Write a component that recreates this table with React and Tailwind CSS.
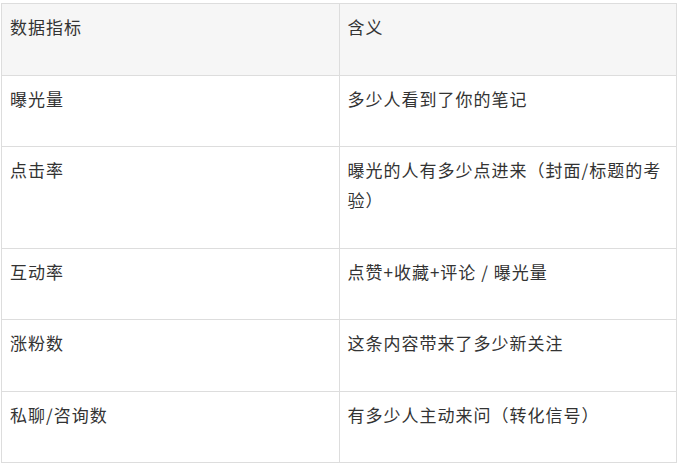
const rows = [
  { metric: "曝光量", meaning: "多少人看到了你的笔记" },
  { metric: "点击率", meaning: "曝光的人有多少点进来（封面/标题的考验）" },
  { metric: "互动率", meaning: "点赞+收藏+评论 / 曝光量" },
  { metric: "涨粉数", meaning: "这条内容带来了多少新关注" },
  { metric: "私聊/咨询数", meaning: "有多少人主动来问（转化信号）" },
];

const cell = "border border-[#dddddd] pl-2 pr-2 pt-2 pb-[32.5px] align-top w-1/2";

export default function App() {
  return (
    <div
      className="bg-white w-[678px] h-[468px] pt-[3px] pl-px text-[17px] leading-[30px] tracking-[1px] text-[#333333]"
      style={{ fontFamily: '"Noto Sans CJK SC", "Noto Sans", sans-serif' }}
    >
      <table className="w-[676px] border-collapse table-fixed text-left">
        <thead className="bg-[#f6f6f6]">
          <tr>
            <th className={cell + " font-normal"}>数据指标</th>
            <th className={cell + " font-normal"}>含义</th>
          </tr>
        </thead>
        <tbody>
          {rows.map((row) => (
            <tr key={row.metric}>
              <td className={cell}>{row.metric}</td>
              <td className={cell}>{row.meaning}</td>
            </tr>
          ))}
        </tbody>
      </table>
    </div>
  );
}
